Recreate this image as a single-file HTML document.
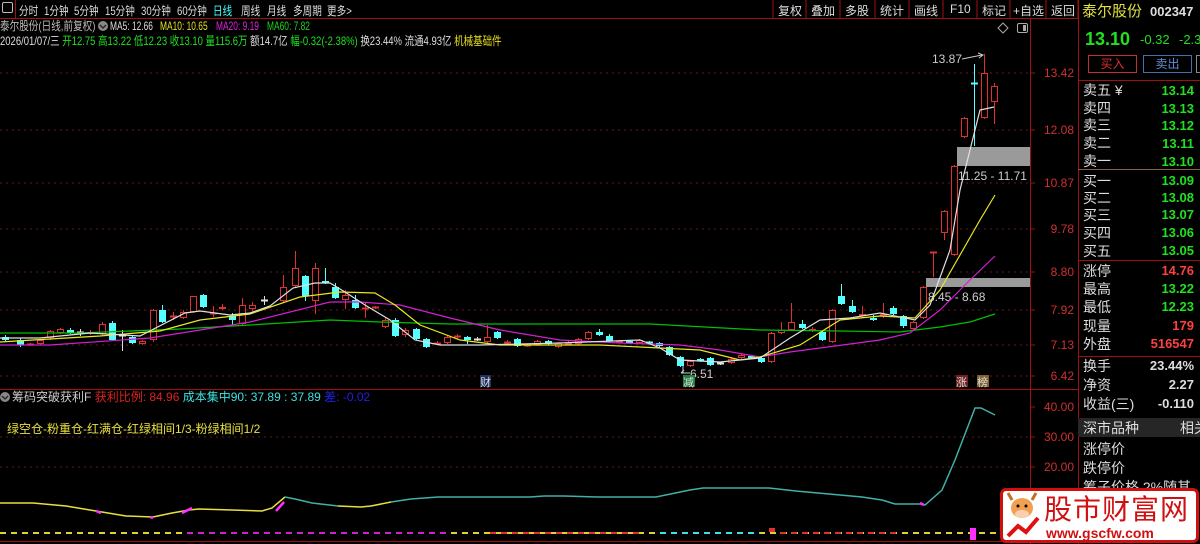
<!DOCTYPE html>
<html><head><meta charset="utf-8">
<style>
*{margin:0;padding:0;box-sizing:border-box}
body{width:1200px;height:544px;background:#000;overflow:hidden;position:relative;font-family:"Liberation Sans","Noto Sans CJK SC",sans-serif;font-size:12px;color:#ccc}
.a{position:absolute;white-space:nowrap;line-height:1}
.tb span{position:absolute;top:2px;font-size:12px;color:#ddd}
.tb span.n{transform:scaleX(0.8);transform-origin:left top}
.lbl{position:absolute;left:1083px;color:#ddd;font-size:14px;line-height:1}
.val{position:absolute;right:6px;font-size:13px;font-weight:bold;line-height:1;font-family:"Liberation Sans",sans-serif}
.ax{position:absolute;right:126px;color:#d03030;font-size:12px;line-height:1}
.sx{transform:scaleX(0.7);transform-origin:left top;font-size:12px}
</style></head><body>
<div class="tb">
<div class="a" style="left:2px;top:2px;width:11px;height:11px;border:1px solid #bbb;border-radius:2px"></div>
<div class="a" style="left:15px;top:0;width:1px;height:18px;background:#a01010"></div>
<span class="n" style="left:19px">分时</span><span class="n" style="left:44px">1分钟</span><span class="n" style="left:74px">5分钟</span><span class="n" style="left:105px">15分钟</span><span class="n" style="left:141px">30分钟</span><span class="n" style="left:177px">60分钟</span><span class="n" style="left:213px;color:#4ff">日线</span><span class="n" style="left:241px">周线</span><span class="n" style="left:267px">月线</span><span class="n" style="left:293px">多周期</span><span class="n" style="left:327px">更多&gt;</span>
<span style="left:778px">复权</span><span style="left:811px">叠加</span><span style="left:845px">多股</span><span style="left:880px">统计</span><span style="left:914px">画线</span><span style="left:950px">F10</span><span style="left:982px">标记</span><span style="left:1013px">+自选</span><span style="left:1051px">返回</span>
</div>
<svg class="a" style="left:0;top:0" width="1200" height="544">
<g stroke="#a01010" stroke-width="1">
<line x1="773" y1="0" x2="773" y2="18"/><line x1="806" y1="0" x2="806" y2="18"/><line x1="840" y1="0" x2="840" y2="18"/><line x1="875" y1="0" x2="875" y2="18"/><line x1="909" y1="0" x2="909" y2="18"/><line x1="943" y1="0" x2="943" y2="18"/><line x1="977" y1="0" x2="977" y2="18"/><line x1="1010" y1="0" x2="1010" y2="18"/><line x1="1046" y1="0" x2="1046" y2="18"/><line x1="1078" y1="0" x2="1078" y2="18"/>
<line x1="0" y1="18.5" x2="1078" y2="18.5"/>
<line x1="1030.5" y1="19" x2="1030.5" y2="544"/>
<line x1="1078.5" y1="0" x2="1078.5" y2="544"/>
<line x1="0" y1="389.5" x2="1078" y2="389.5"/>
<line x1="0" y1="541.5" x2="1078" y2="541.5"/>
<line x1="1078" y1="80.5" x2="1200" y2="80.5"/>
<line x1="1078" y1="260.5" x2="1200" y2="260.5"/>
<line x1="1078" y1="356.5" x2="1200" y2="356.5"/>
</g>
<line x1="1078" y1="169.5" x2="1200" y2="169.5" stroke="#8a6040"/>
<g stroke="#6a1818" stroke-dasharray="2,4">
<line x1="0" y1="73" x2="1030" y2="73"/><line x1="0" y1="130" x2="1030" y2="130"/><line x1="0" y1="183" x2="1030" y2="183"/><line x1="0" y1="229" x2="1030" y2="229"/><line x1="0" y1="272" x2="1030" y2="272"/><line x1="0" y1="310" x2="1030" y2="310"/><line x1="0" y1="345" x2="1030" y2="345"/><line x1="0" y1="376" x2="1030" y2="376"/>
<line x1="0" y1="437" x2="1030" y2="437"/><line x1="0" y1="467" x2="1030" y2="467"/>
</g>
<g stroke="#a01010"><line x1="1030" y1="73" x2="1035" y2="73"/><line x1="1030" y1="130" x2="1035" y2="130"/><line x1="1030" y1="183" x2="1035" y2="183"/><line x1="1030" y1="229" x2="1035" y2="229"/><line x1="1030" y1="272" x2="1035" y2="272"/><line x1="1030" y1="310" x2="1035" y2="310"/><line x1="1030" y1="345" x2="1035" y2="345"/><line x1="1030" y1="376" x2="1035" y2="376"/><line x1="1030" y1="407" x2="1035" y2="407"/><line x1="1030" y1="437" x2="1035" y2="437"/><line x1="1030" y1="467" x2="1035" y2="467"/></g>
<rect x="957" y="147" width="73" height="19" fill="#9a9a9a"/>
<rect x="926" y="278" width="104" height="9" fill="#9a9a9a"/>
<text x="958" y="180" fill="#ccc" font-size="12" font-family="Liberation Sans">11.25 - 11.71</text>
<text x="928" y="301" fill="#ccc" font-size="12" font-family="Liberation Sans">8.45 - 8.68</text>
<text x="932" y="63" fill="#ccc" font-size="12" font-family="Liberation Sans">13.87</text>
<path d="M962 59 L982 55 M978 53 L983 55 L979 58" stroke="#ccc" fill="none"/>
<text x="690" y="378" fill="#ccc" font-size="12" font-family="Liberation Sans">6.51</text>
<path d="M681 373 L690 373 M681 373 L684 370" stroke="#ccc" fill="none"/>
<path d="M683 366 L683 373" stroke="#ccc"/>
<g id="cand"></g>
<polyline fill="none" stroke="#00c000" stroke-width="1.2" points="0,333 80,333 180,329 250,325 330,320 380,322 450,324 650,324 760,330 840,331 900,332 940,327 970,322 995,314"/>
<polyline fill="none" stroke="#d020d0" stroke-width="1.2" points="0,345 50,345 150,338 250,322 330,302 360,302 400,305 450,318 500,330 560,340 620,343 680,345 720,350 760,357 790,352 820,348 880,340 910,333 940,310 970,280 995,256"/>
<polyline fill="none" stroke="#e8e820" stroke-width="1.2" points="0,342 100,336 160,331 200,320 250,314 300,297 340,292 375,293 395,305 420,325 460,340 500,345 600,345 700,350 740,360 760,357 800,345 840,320 880,316 915,318 940,290 960,255 980,220 995,195"/>
<polyline fill="none" stroke="#e0e0e0" stroke-width="1.2" points="0,338 40,338 90,333 140,336 185,313 200,311 230,315 250,313 270,306 293,288 315,283 330,283 345,292 365,305 390,320 400,328 415,340 440,345 480,345 560,343 640,340 660,348 680,360 720,362 760,358 790,338 820,320 850,318 880,313 915,320 930,305 950,250 960,190 980,110 994,107"/>
<polyline fill="none" stroke="#e8e040" stroke-width="1.5" points="0,503 33,503 66,506 96,511 126,516 153,517 172,513 189,510 199,509 232,510 262,511 272,508 285,497"/>
<polyline fill="none" stroke="#40b0a8" stroke-width="1.5" points="285,497 295,499 312,503 338,506"/>
<polyline fill="none" stroke="#e8e040" stroke-width="1.5" points="338,506 361,507 371,506 391,502"/>
<polyline fill="none" stroke="#40b0a8" stroke-width="1.5" points="391,502 411,499 438,497 464,497 530,497 544,496 564,496 597,497 656,497 690,490 703,488 729,488 769,488 796,491 829,494 862,497 882,500 895,504 922,504 925,505 942,490 955,460 975,408 981,408 995,415"/>
<g stroke="#ff30ff" stroke-width="2.5"><line x1="96" y1="511" x2="101" y2="513"/><line x1="150" y1="517" x2="153" y2="518"/><line x1="182" y1="513" x2="192" y2="508"/><line x1="276" y1="511" x2="284" y2="502"/><line x1="920" y1="503" x2="924" y2="505"/></g>
<line x1="0" y1="533" x2="1000" y2="533" stroke="#e0d030" stroke-width="2" stroke-dasharray="6,5"/>
<g stroke-width="2" stroke-dasharray="6,5">
<line x1="187" y1="533" x2="450" y2="533" stroke="#d020d0"/>
<line x1="490" y1="533" x2="640" y2="533" stroke="#e03030"/>
<line x1="660" y1="533" x2="760" y2="533" stroke="#40e0e0"/>
<line x1="780" y1="533" x2="900" y2="533" stroke="#e03030"/>
</g>
<rect x="970" y="528" width="6" height="12" fill="#ff30ff"/>
<rect x="769" y="528" width="6" height="4" fill="#e03030"/>
<rect x="480" y="375" width="11" height="12" fill="#203060"/><text x="480" y="386" fill="#ddd" font-size="11" font-family="Noto Sans CJK SC">财</text>
<rect x="683" y="375" width="12" height="12" fill="#208040"/><text x="683" y="386" fill="#ddd" font-size="11" font-family="Noto Sans CJK SC">减</text>
<rect x="956" y="375" width="12" height="12" fill="#702020"/><text x="956" y="386" fill="#ddd" font-size="11" font-family="Noto Sans CJK SC">涨</text>
<rect x="977" y="375" width="12" height="12" fill="#806030"/><text x="977" y="386" fill="#ddd" font-size="11" font-family="Noto Sans CJK SC">榜</text>
<path d="M1003 23 L1008 28 L1003 33 L998 28 Z" stroke="#aaa" fill="none"/>
<rect x="1017.5" y="23.5" width="10" height="9" rx="1.5" stroke="#aaa" fill="none"/><rect x="1023" y="25" width="3" height="6" fill="#aaa"/>
<circle cx="103" cy="26" r="5" fill="#888"/><path d="M100 25 L103 28 L106 25" stroke="#222" fill="none" stroke-width="1.3"/>
<circle cx="5" cy="397" r="5" fill="#888"/><path d="M2 396 L5 399 L8 396" stroke="#222" fill="none" stroke-width="1.3"/>
<rect x="1078" y="418" width="122" height="19" fill="#262626"/>
</svg>
<div class="a" style="left:0;top:20px;color:#bbb;transform:scaleX(0.8);transform-origin:left top">泰尔股份(日线,前复权)</div>
<div class="a sx" style="left:110px;top:20px;color:#ddd">MA5: 12.66</div>
<div class="a sx" style="left:160px;top:20px;color:#e8e020">MA10: 10.65</div>
<div class="a sx" style="left:216px;top:20px;color:#e020e0">MA20: 9.19</div>
<div class="a sx" style="left:267px;top:20px;color:#20d020">MA60: 7.82</div>
<div class="a" style="left:0;top:35px;transform:scaleX(0.79);transform-origin:left top"><span style="color:#ddd">2026/01/07/三</span> <span style="color:#20e020">开12.75 高13.22 低12.23 收13.10 量115.6万</span> <span style="color:#ddd">额14.7亿</span> <span style="color:#20e020">幅-0.32(-2.38%)</span> <span style="color:#ddd">换23.44% 流通4.93亿</span> <span style="color:#e8e020">机械基础件</span></div>
<div class="a" style="left:12px;top:391px;font-size:12px"><span style="color:#ccc">筹码突破获利F</span> <span style="color:#e02020">获利比例: 84.96</span> <span style="color:#40e0e0">成本集中90: 37.89 : 37.89</span> <span style="color:#2020e0">差: -0.02</span></div>
<div class="a" style="left:7px;top:423px;font-size:12px;color:#e8e040">绿空仓-粉重仓-红满仓-红绿相间1/3-粉绿相间1/2</div>
<div class="ax" style="top:67px">13.42</div><div class="ax" style="top:124px">12.08</div><div class="ax" style="top:177px">10.87</div><div class="ax" style="top:223px">9.78</div><div class="ax" style="top:266px">8.80</div><div class="ax" style="top:304px">7.92</div><div class="ax" style="top:339px">7.13</div><div class="ax" style="top:370px">6.42</div><div class="ax" style="top:401px">40.00</div><div class="ax" style="top:431px">30.00</div><div class="ax" style="top:461px">20.00</div>
<div class="a" style="left:1082px;top:4px;font-size:15px;color:#e0e040">泰尔股份</div>
<div class="a" style="left:1150px;top:5px;font-size:13px;color:#ddd;font-weight:bold">002347</div>
<div class="a" style="left:1085px;top:30px;font-size:18px;color:#20e020;font-weight:bold">13.10</div>
<div class="a" style="left:1140px;top:33px;font-size:13px;color:#20e020">-0.32</div>
<div class="a" style="left:1179px;top:33px;font-size:13px;color:#20e020">-2.3</div>
<div class="a" style="left:1088px;top:55px;width:49px;height:18px;border:1px solid #c03030;color:#e03030;font-size:12px;text-align:center;line-height:16px">买入</div>
<div class="a" style="left:1143px;top:55px;width:49px;height:18px;border:1px solid #4070b0;color:#6090d0;font-size:12px;text-align:center;line-height:16px">卖出</div>
<div class="a" style="left:1196px;top:55px;width:6px;height:18px;border:1px solid #888"></div>
<div class="lbl" style="top:83px">卖五 ¥</div><div class="val" style="top:84px;color:#20e020">13.14</div>
<div class="lbl" style="top:101px">卖四</div><div class="val" style="top:102px;color:#20e020">13.13</div>
<div class="lbl" style="top:118px">卖三</div><div class="val" style="top:119px;color:#20e020">13.12</div>
<div class="lbl" style="top:136px">卖二</div><div class="val" style="top:137px;color:#20e020">13.11</div>
<div class="lbl" style="top:154px">卖一</div><div class="val" style="top:155px;color:#20e020">13.10</div>
<div class="lbl" style="top:174px">买一</div><div class="val" style="top:174px;color:#20e020">13.09</div>
<div class="lbl" style="top:191px">买二</div><div class="val" style="top:191px;color:#20e020">13.08</div>
<div class="lbl" style="top:208px">买三</div><div class="val" style="top:208px;color:#20e020">13.07</div>
<div class="lbl" style="top:226px">买四</div><div class="val" style="top:226px;color:#20e020">13.06</div>
<div class="lbl" style="top:244px">买五</div><div class="val" style="top:244px;color:#20e020">13.05</div>
<div class="lbl" style="top:264px">涨停</div><div class="val" style="top:264px;color:#ff4040">14.76</div>
<div class="lbl" style="top:282px">最高</div><div class="val" style="top:282px;color:#20e020">13.22</div>
<div class="lbl" style="top:300px">最低</div><div class="val" style="top:300px;color:#20e020">12.23</div>
<div class="lbl" style="top:319px">现量</div><div class="val" style="top:319px;color:#ff4040">179</div>
<div class="lbl" style="top:337px">外盘</div><div class="val" style="top:337px;color:#ff4040">516547</div>
<div class="lbl" style="top:359px">换手</div><div class="val" style="top:359px;color:#ddd">23.44%</div>
<div class="lbl" style="top:378px">净资</div><div class="val" style="top:378px;color:#ddd">2.27</div>
<div class="lbl" style="top:397px">收益(三)</div><div class="val" style="top:397px;color:#ddd">-0.110</div>
<div class="lbl" style="top:421px">深市品种</div><div class="a" style="left:1180px;top:421px;font-size:14px;color:#ddd">相关</div>
<div class="lbl" style="top:442px">涨停价</div>
<div class="lbl" style="top:461px">跌停价</div>
<div class="lbl" style="top:480px">筹子价格 2%随其</div>
<div class="a" style="left:1000px;top:488px;width:199px;height:55px;background:#fff;border:3px solid #d01010;border-radius:6px"></div>
<svg class="a" style="left:1004px;top:492px" width="36" height="48"><ellipse cx="18" cy="16" rx="11" ry="10" fill="#f0a050"/><path d="M8 8 L4 1 M28 8 L32 1" stroke="#c07020" stroke-width="3"/><ellipse cx="18" cy="22" rx="7" ry="4" fill="#f8d0b0"/><circle cx="14" cy="14" r="1.5" fill="#000"/><circle cx="22" cy="14" r="1.5" fill="#000"/><path d="M4 44 L14 34 L22 40 L34 26" stroke="#e01010" stroke-width="4" fill="none"/></svg>
<div class="a" style="left:1044px;top:494px;font-size:28px;color:#d01010;font-family:'Noto Sans CJK SC',sans-serif;letter-spacing:1px">股市财富网</div>
<div class="a" style="left:1046px;top:526px;font-size:14px;color:#d01010;font-weight:bold">www.gscfw.com</div>
<script>
var C=[[5,337,340,335,342,'c'],[20,340,345,338,347,'c'],[30,344,345,343,346,'r'],[40,340,344,339,345,'r'],[50,331,338,330,340,'r'],[60,329,333,328,334,'r'],[70,330,333,328,334,'c'],[80,332,332,329,336,'w'],[90,332,334,330,335,'r'],[102,324,334,322,335,'r'],[112,323,340,321,341,'c'],[122,335,335,330,351,'w'],[132,337,343,336,344,'c'],[142,341,344,340,345,'r'],[153,310,340,309,342,'r'],[162,310,322,305,323,'c'],[173,316,317,312,320,'r'],[183,312,318,310,319,'r'],[193,296,312,296,313,'r'],[203,295,307,294,308,'c'],[213,313,314,306,317,'r'],[222,307,309,304,310,'r'],[232,316,320,313,325,'c'],[242,305,324,298,326,'r'],[252,305,309,302,311,'r'],[264,300,300,296,305,'w'],[283,287,301,275,302,'r'],[295,268,286,251,287,'r'],[305,276,296,275,301,'c'],[315,268,301,263,314,'r'],[325,281,283,268,284,'c'],[335,287,298,283,299,'c'],[345,295,300,290,309,'r'],[355,300,308,295,309,'c'],[365,308,309,302,318,'r'],[375,307,308,306,309,'r'],[385,320,327,318,328,'r'],[395,320,336,318,337,'c'],
[405,330,335,328,337,'r'],[416,329,339,328,340,'c'],[426,339,347,338,348,'c'],[437,343,344,341,345,'r'],[447,337,343,336,344,'r'],[457,336,337,334,339,'r'],[467,337,340,336,344,'c'],[477,339,339,337,341,'w'],[487,337,342,325,343,'r'],[497,332,338,331,339,'c'],[507,342,343,340,345,'r'],[517,339,346,338,347,'c'],[527,345,346,344,347,'r'],[537,341,345,340,346,'r'],[548,341,344,340,345,'c'],[558,343,347,342,348,'r'],[568,343,344,341,345,'r'],[578,339,344,338,345,'r'],[588,332,339,331,340,'r'],[599,332,335,329,336,'c'],[609,336,341,334,342,'c'],[619,341,342,340,343,'r'],[629,341,343,340,344,'c'],[639,340,343,339,344,'r'],[649,342,343,341,344,'c'],[659,343,346,342,347,'c'],[669,347,355,346,356,'c'],[680,357,366,356,367,'c'],[690,361,366,360,367,'r'],[700,359,361,358,362,'c'],[710,358,365,357,366,'c'],[720,363,364,362,365,'w'],[731,359,363,358,364,'r'],[741,355,358,354,359,'r'],[751,356,358,355,359,'c'],[761,358,362,357,363,'c'],[771,333,362,332,363,'r'],[781,330,333,322,334,'r'],[791,322,330,303,331,'r'],[802,324,328,320,329,'c'],[812,329,331,327,332,'r'],[822,332,340,331,341,'c'],[832,310,342,309,343,'r'],[841,296,304,284,305,'c'],[852,306,312,300,313,'c'],[862,314,316,306,318,'r'],[873,318,320,315,321,'c'],[883,314,316,303,318,'r'],[893,308,314,306,315,'c'],[903,316,326,315,328,'c'],[913,322,329,321,330,'r'],[923,287,318,286,319,'r'],[933,252,252,252,277,'r'],[944,211,233,210,240,'r'],[954,166,255,165,256,'r'],[964,118,137,117,138,'r'],[974,83,83,64,146,'c'],[984,73,118,54,119,'r'],[994,86,102,83,124,'r']];
var s='';C.forEach(function(c){var x=c[0],t=c[1],b=c[2],h=c[3],l=c[4],k=c[5];var col=k=='r'?'#e03030':k=='c'?'#54ffff':'#e0e0e0';
s+='<line x1="'+(x+.5)+'" y1="'+h+'" x2="'+(x+.5)+'" y2="'+l+'" stroke="'+col+'"/>';
if(b-t<2){s+='<line x1="'+(x-3)+'" y1="'+t+'.5" x2="'+(x+4)+'" y2="'+t+'.5" stroke="'+col+'" stroke-width="2"/>';}
else if(k=='c'){s+='<rect x="'+(x-3)+'" y="'+t+'" width="7" height="'+(b-t)+'" fill="'+col+'"/>';}
else{s+='<rect x="'+(x-2.5)+'" y="'+(t+.5)+'" width="6" height="'+(b-t-1)+'" fill="#000" stroke="'+col+'"/>';}});
document.getElementById('cand').innerHTML=s;
</script>
</body></html>
